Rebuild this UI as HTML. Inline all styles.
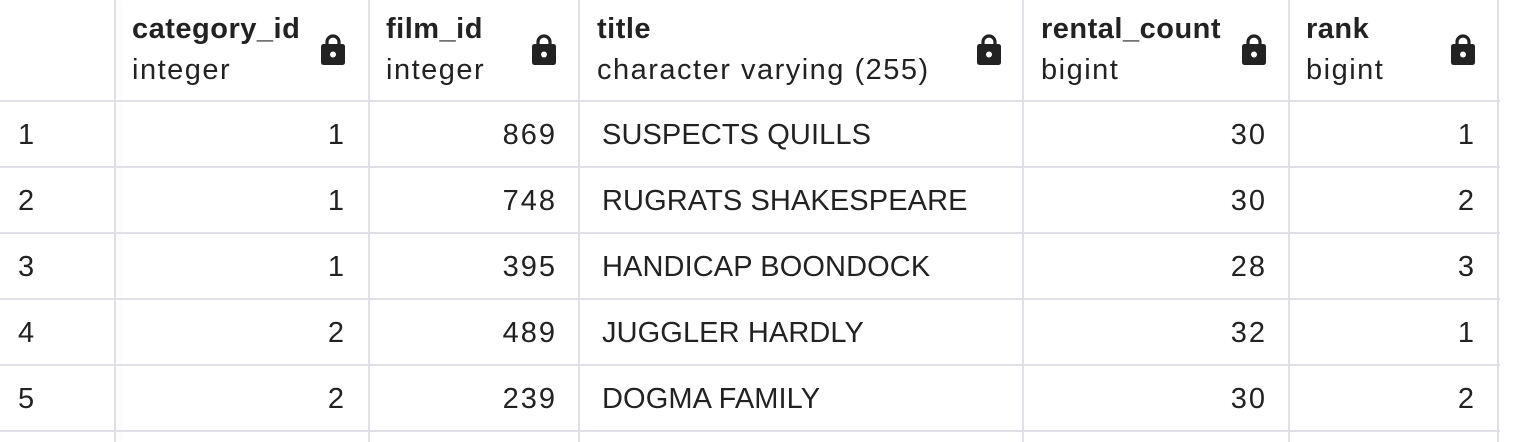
<!DOCTYPE html>
<html><head><meta charset="utf-8"><style>
body{margin:0;width:1536px;height:442px;overflow:hidden;background:#fff;font-family:"Liberation Sans",Roboto,sans-serif;color:#222;}
.vl{position:absolute;top:0;height:442px;width:2px;background:#e0e0e6;}
.hl{position:absolute;left:0;width:1500px;height:2px;background:#e0e0e6;}
.t{position:absolute;font-size:29px;white-space:nowrap;line-height:34px;}
.b{font-weight:bold;letter-spacing:0.5px;}
.ty{letter-spacing:1.5px;}
.u{letter-spacing:0.1px;}
.r{text-align:right;letter-spacing:2px;}
svg{position:absolute;}
</style></head><body>
<div class="vl" style="left:114px;box-shadow:4px 0 6px rgba(0,0,0,0.06)"></div>
<div class="vl" style="left:368px"></div>
<div class="vl" style="left:578px"></div>
<div class="vl" style="left:1022px"></div>
<div class="vl" style="left:1288px"></div>
<div class="vl" style="left:1497px"></div>
<div class="hl" style="top:100px"></div>
<div class="hl" style="top:166px"></div>
<div class="hl" style="top:232px"></div>
<div class="hl" style="top:298px"></div>
<div class="hl" style="top:364px"></div>
<div class="hl" style="top:430px"></div>

<div class="t b" style="left:132px;top:12px">category_id</div><div class="t ty" style="left:132px;top:53px">integer</div>
<div class="t b" style="left:386px;top:12px">film_id</div><div class="t ty" style="left:386px;top:53px">integer</div>
<div class="t b" style="left:597px;top:12px">title</div><div class="t ty" style="left:597px;top:53px">character varying (255)</div>
<div class="t b" style="left:1041px;top:12px">rental_count</div><div class="t ty" style="left:1041px;top:53px">bigint</div>
<div class="t b" style="left:1306px;top:12px">rank</div><div class="t ty" style="left:1306px;top:53px">bigint</div>

<svg width="0" height="0"><defs><symbol id="lk" viewBox="0 0 26 34"><path d="M7 12V9a6 6 0 0 1 12 0v3" fill="none" stroke="#222" stroke-width="3.2"/><rect x="1" y="11" width="24" height="21" rx="2.5" fill="#222"/><circle cx="13" cy="21.5" r="3" fill="#fff"/></symbol></defs></svg>
<svg style="left:320px;top:33px" width="26" height="34"><use href="#lk"/></svg>
<svg style="left:531px;top:33px" width="26" height="34"><use href="#lk"/></svg>
<svg style="left:976px;top:33px" width="26" height="34"><use href="#lk"/></svg>
<svg style="left:1241px;top:33px" width="26" height="34"><use href="#lk"/></svg>
<svg style="left:1450px;top:33px" width="26" height="34"><use href="#lk"/></svg>

<div id="rows"></div>
<script>
var d=[[1,1,869,"SUSPECTS QUILLS",30,1],[2,1,748,"RUGRATS SHAKESPEARE",30,2],[3,1,395,"HANDICAP BOONDOCK",28,3],[4,2,489,"JUGGLER HARDLY",32,1],[5,2,239,"DOGMA FAMILY",30,2]];
var h="";
d.forEach(function(r,i){var y=118+i*66;
h+='<div class="t" style="left:18px;top:'+y+'px">'+r[0]+'</div>';
h+='<div class="t r" style="right:'+(1536-346)+'px;top:'+y+'px">'+r[1]+'</div>';
h+='<div class="t r" style="right:'+(1536-557)+'px;top:'+y+'px">'+r[2]+'</div>';
h+='<div class="t u" style="left:602px;top:'+y+'px">'+r[3]+'</div>';
h+='<div class="t r" style="right:'+(1536-1267)+'px;top:'+y+'px">'+r[4]+'</div>';
h+='<div class="t r" style="right:'+(1536-1476)+'px;top:'+y+'px">'+r[5]+'</div>';
});
document.getElementById("rows").innerHTML=h;
</script>
</body></html>
